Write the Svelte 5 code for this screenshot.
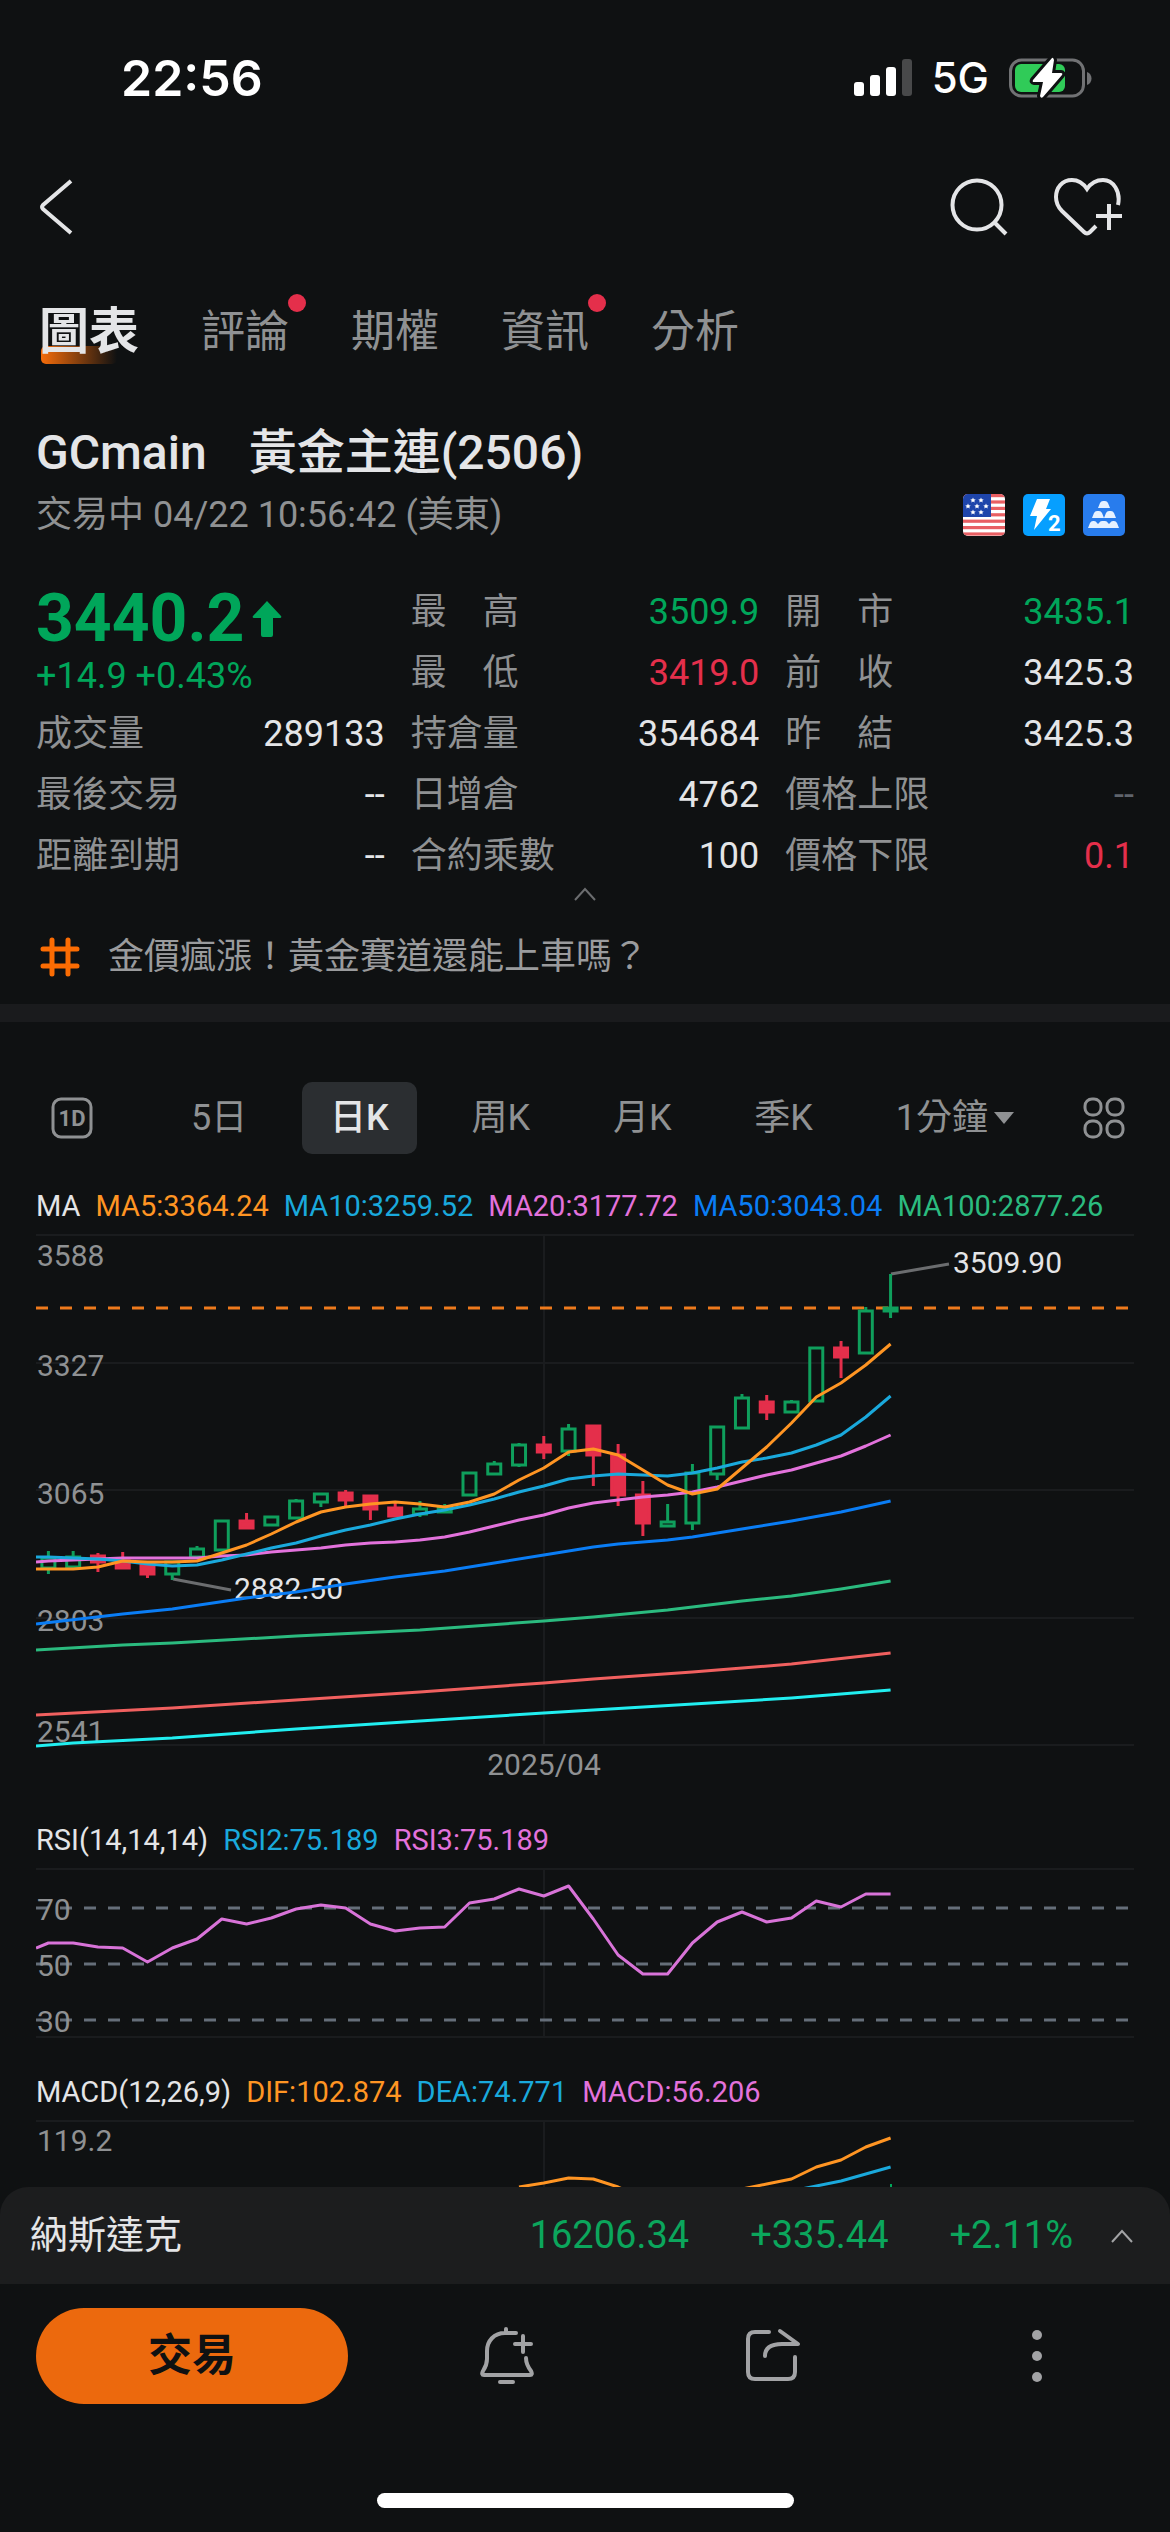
<script>
  const tabs = [
    { name: "圖表", active: true },
    { name: "評論", dot: true },
    { name: "期權" },
    { name: "資訊", dot: true },
    { name: "分析" },
  ];

  const summary = [
    { label: "成交量", value: "289133" },
    { label: "最後交易", value: "--" },
    { label: "距離到期", value: "--" },
  ];

  const details = [
    [
      { label: "最　高", value: "3509.9", tone: "up" },
      { label: "最　低", value: "3419.0", tone: "down" },
      { label: "持倉量", value: "354684" },
      { label: "日增倉", value: "4762" },
      { label: "合約乘數", value: "100" },
    ],
    [
      { label: "開　市", value: "3435.1", tone: "up" },
      { label: "前　收", value: "3425.3" },
      { label: "昨　結", value: "3425.3" },
      { label: "價格上限", value: "--", tone: "muted" },
      { label: "價格下限", value: "0.1", tone: "down" },
    ],
  ];

  const periods = ["5日", "日K", "周K", "月K", "季K"];
  let period = "日K";

  const maLegend = [
    { text: "MA", color: "#e4e5e7" },
    { text: "MA5:3364.24", color: "#ff9523" },
    { text: "MA10:3259.52", color: "#1aa9dc" },
    { text: "MA20:3177.72", color: "#e372dc" },
    { text: "MA50:3043.04", color: "#0a7df5" },
    { text: "MA100:2877.26", color: "#2bbb7f" },
  ];
  const rsiLegend = [
    { text: "RSI(14,14,14)", color: "#e4e5e7" },
    { text: "RSI2:75.189", color: "#1aa9dc" },
    { text: "RSI3:75.189", color: "#e372dc" },
  ];
  const macdLegend = [
    { text: "MACD(12,26,9)", color: "#e4e5e7" },
    { text: "DIF:102.874", color: "#ff9523" },
    { text: "DEA:74.771", color: "#1aa9dc" },
    { text: "MACD:56.206", color: "#e372dc" },
  ];

  // x of the i-th candle; anything below 0 is the left edge of the plot
  const step = 24.77;
  const cx = (i) => (i < 0 ? 0 : 12.4 + step * i);

  // body top, body bottom, high, low, rising
  const candles = [
    [322, 334, 316, 339, 1], [321, 333, 316, 334, 1], [320, 328, 318, 337, 0],
    [325, 334, 317, 334, 0], [328, 340, 327, 343, 0], [326, 340, 326, 345, 1],
    [313, 323, 311, 323, 1], [285, 316, 285, 316, 1], [285, 294, 278, 294, 0],
    [281, 291, 281, 291, 1], [265, 284, 264, 284, 1], [258, 268, 258, 272, 1],
    [257, 266, 255, 271, 0], [260, 275, 260, 285, 0], [272, 282, 268, 282, 0],
    [273, 280, 266, 282, 1], [272, 278, 269, 278, 1], [237, 261, 237, 261, 1],
    [228, 240, 226, 240, 1], [209, 231, 208, 232, 1], [209, 218, 201, 224, 0],
    [193, 217, 189, 221, 1], [190, 221, 190, 251, 0], [219, 261, 209, 271, 0],
    [259, 289, 246, 301, 0], [286, 292, 269, 292, 1], [237, 289, 229, 295, 1],
    [191, 240, 191, 245, 1], [162, 194, 159, 194, 1], [166, 178, 160, 185, 0],
    [166, 178, 165, 178, 1], [112, 167, 112, 167, 1], [112, 123, 106, 143, 0],
    [75, 119, 72, 119, 1], [72, 77, 39, 83, 1],
  ];

  const every = (ys) => ys.map((y, i) => [i - 1, y]);
  const points = (list) => list.map(([i, y]) => `${cx(i).toFixed(1)},${y}`).join(" ");

  const lines = [
    {
      color: "#21eef0",
      data: [[-1, 511], [1, 508], [5, 503], [10, 494], [15, 486], [20, 478], [22, 475], [30, 463], [34, 455]],
    },
    {
      color: "#f0605f",
      data: [[-1, 480], [5, 473], [10, 465], [15, 457], [20, 448], [22, 444], [26, 437], [30, 429], [34, 418]],
    },
    {
      color: "#2bbb7f",
      data: [[-1, 415], [3, 410], [5, 408], [10, 401], [15, 395], [20, 386], [22, 382], [25, 375], [28, 366], [30, 361], [32, 354], [34, 346]],
    },
    {
      color: "#0a7df5",
      data: [[-1, 389], [3, 379], [5, 374], [8, 363], [10, 357], [12, 349], [14, 342], [16, 336], [18, 328], [20, 320], [22, 312], [23, 309], [25, 305], [26, 302], [28, 294], [30, 286], [32, 277], [34, 266]],
    },
    {
      color: "#e372dc",
      data: every([327, 326, 325, 324, 323, 323, 323, 323, 321, 320, 317, 315, 313, 310, 308, 307, 305, 302, 297, 291, 285, 280, 273, 268, 265, 262, 260, 257, 252, 246, 240, 235, 228, 221, 211, 200]),
    },
    {
      color: "#1aa9dc",
      data: every([322, 322, 323, 324, 326, 329, 331, 330, 325, 319, 313, 308, 301, 295, 290, 284, 279, 275, 270, 264, 257, 251, 244, 241, 239, 240, 241, 238, 233, 227, 223, 218, 210, 200, 182, 161]),
    },
    {
      color: "#ff9523",
      data: every([334, 334, 334, 332, 326, 327, 327, 326, 318, 310, 299, 287, 277, 272, 269, 267, 269, 272, 267, 259, 245, 233, 217, 214, 220, 235, 250, 259, 254, 233, 212, 188, 162, 148, 130, 109]),
    },
  ];

  const gridY = [0, 128, 255, 383, 510];
  const priceLabels = [
    { text: "3588", y: 31 },
    { text: "3327", y: 141 },
    { text: "3065", y: 269 },
    { text: "2803", y: 396 },
    { text: "2541", y: 507 },
  ];

  const rsi = every([79, 74, 74, 78, 79, 93, 79, 70, 50, 55, 49, 40, 36, 39, 55, 62, 59, 58, 34, 30, 20, 27, 17, 50, 86, 105, 105, 74, 53, 43, 53, 49, 32, 38, 25, 25]);
  const rsiLevels = [
    { text: "70", y: 39 },
    { text: "50", y: 95 },
    { text: "30", y: 151 },
  ];

  const dif = [[19, 66], [20, 62], [21, 57], [22, 58], [23, 66], [25, 90], [27, 74], [28, 68], [29, 63], [30, 58], [31, 46], [32, 39], [33, 26], [34, 17]];
  const dea = [[30, 70], [31, 65], [32, 60], [33, 53], [34, 46]];

  const stars = [[10, 6], [18, 6], [5, 12], [14, 12], [23, 12], [10, 18], [18, 18]];
</script>

{#snippet legend(items)}
  <div class="legend">
    {#each items as item}
      <span style="color: {item.color}">{item.text}</span>
    {/each}
  </div>
{/snippet}

{#snippet row(item)}
  <div class="row">
    <dt>{item.label}</dt>
    <dd class={item.tone}>{item.value}</dd>
  </div>
{/snippet}

<div class="screen">
  <div class="status">
    <span class="time">22:56</span>
    <div class="status-right">
      <svg width="58" height="38" viewBox="0 0 58 38" fill="#fff">
        <rect x="0" y="23" width="10" height="14" rx="3" />
        <rect x="16" y="16" width="10" height="21" rx="3" />
        <rect x="32" y="8" width="10" height="29" rx="3" />
        <rect x="48" y="0" width="10" height="37" rx="3" fill="#48494a" />
      </svg>
      <span class="network">5G</span>
      <svg width="83" height="42" viewBox="0 0 83 42">
        <rect x="1.5" y="3" width="73" height="36" rx="11" fill="none" stroke="#717274" stroke-width="3" />
        <path d="M78 15c6 2 6 11 0 13z" fill="#717274" />
        <rect x="6" y="7" width="50" height="28" rx="6" fill="#30cb58" />
        <path d="M43 1 24 23q-1 2 1 2h9l-3 14q1 3 3 1l19-22q1-2-1-2h-9l2-13q-1-3-2-2z" fill="#fff" stroke="#0f1112" stroke-width="6" paint-order="stroke" stroke-linejoin="round" />
      </svg>
    </div>
  </div>

  <header>
    <button aria-label="返回">
      <svg width="36" height="58" viewBox="0 0 36 58" fill="none" stroke="#e4e5e7" stroke-width="4">
        <path d="M33 3 5 27q-2 2 0 4l28 24" />
      </svg>
    </button>
    <div class="header-actions">
      <button aria-label="搜尋">
        <svg width="58" height="60" viewBox="0 0 58 60" fill="none" stroke="#e4e5e7" stroke-width="4">
          <circle cx="27" cy="28" r="24.500" />
          <path d="m44 45 12 12" />
        </svg>
      </button>
      <button aria-label="加入自選">
        <svg width="68" height="60" viewBox="0 0 68 60" fill="none" stroke="#e4e5e7" stroke-width="4">
          <path d="M64 28C67 14 59 3 49 3c-7 0-12 3-16 9C29 6 24 3 18 3 8 3 2 11 2 20c0 6 2 10 6 14l22 21q3 3 6 0l6-6" />
          <path d="M42 39h26M55 27v26" />
        </svg>
      </button>
    </div>
  </header>

  <nav class="tabs">
    {#each tabs as tab}
      <a href="#{tab.name}" class:active={tab.active} class:dot={tab.dot}>{tab.name}</a>
    {/each}
  </nav>

  <section class="quote">
    <h1><span>GCmain</span><span>黃金主連(2506)</span></h1>
    <div class="session">
      <span>交易中 04/22 10:56:42 (美東)</span>
      <div class="badges">
        <svg width="42" height="42" viewBox="0 0 42 42">
          <clipPath id="flag"><rect width="42" height="42" rx="5" /></clipPath>
          <g clip-path="url(#flag)">
            <rect width="42" height="42" fill="#fff" />
            {#each [0, 1, 2, 3, 4, 5, 6] as n}
              <rect y={n * 6.4} width="42" height="3.200" fill="#e85f63" />
            {/each}
            <rect width="28" height="23" fill="#1e45ab" />
            {#each stars as [x, y]}
              <path d="M{x} {y - 2.5}l.8 1.700 1.900.2-1.400 1.300.4 1.900-1.700-1-1.700 1 .4-1.900-1.400-1.300 1.900-.2z" fill="#fff" />
            {/each}
          </g>
        </svg>
        <svg width="42" height="42" viewBox="0 0 42 42">
          <rect width="42" height="42" rx="5" fill="#069fff" />
          <path d="M14 5h13l-4 10h5L11 36l3-14H7z" fill="#fff" />
          <text x="25" y="37" class="level">2</text>
        </svg>
        <svg width="42" height="42" viewBox="0 0 42 42">
          <rect width="42" height="42" rx="5" fill="#287ced" />
          <g fill="#e6f1ff">
            <path d="M15 14l2-5q1-2 3-2h2q2 0 3 2l2 5z" />
            <path d="M9 24l2-5q1-2 3-2h2q2 0 3 2l2 5zM21 24l2-5q1-2 3-2h2q2 0 3 2l2 5z" />
            <path d="M5 34l2-5q1-2 3-2h1q2 0 3 2l1 1 1-1q1-2 3-2h3q2 0 3 2l1 1 1-1q1-2 3-2h1q2 0 3 2l2 5z" />
          </g>
        </svg>
      </div>
    </div>

    <div class="stats">
      <div>
        <div class="price">
          <strong>3440.2</strong>
          <svg width="30" height="36" viewBox="0 0 30 36" fill="#00a65a">
            <path d="M15 0 29 15q1 2-1 2h-7v17q0 2-2 2h-8q-2 0-2-2V17H2q-2 0-1-2z" />
          </svg>
        </div>
        <p class="change">+14.9 +0.43%</p>
        <dl>
          {#each summary as item}
            {@render row(item)}
          {/each}
        </dl>
      </div>
      {#each details as column}
        <dl>
          {#each column as item}
            {@render row(item)}
          {/each}
        </dl>
      {/each}
    </div>

    <button class="collapse" aria-label="收起">
      <svg width="22" height="14" viewBox="0 0 22 14" fill="none" stroke="#6b6d6f" stroke-width="2">
        <path d="M1 13 11 2l10 11" />
      </svg>
    </button>

    <a class="topic" href="#topic">
      <svg width="40" height="40" viewBox="0 0 40 40" fill="none" stroke="#fb6c03" stroke-width="5" stroke-linecap="round">
        <path d="M3 12h34M3 29h34M12 3v34M28 3v34" />
      </svg>
      <span>金價瘋漲！黃金賽道還能上車嗎？</span>
    </a>
  </section>

  <div class="divider"></div>

  <div class="toolbar">
    <button aria-label="分時">
      <svg width="42" height="42" viewBox="0 0 42 42">
        <rect x="2" y="2" width="38" height="38" rx="8" fill="none" stroke="#8f9193" stroke-width="3" />
        <text x="21" y="29" text-anchor="middle" class="oneday">1D</text>
      </svg>
    </button>
    <div class="periods">
      {#each periods as name}
        <button class:selected={period === name} on:click={() => (period = name)}>{name}</button>
      {/each}
      <button>1分鐘<i class="caret"></i></button>
    </div>
    <button aria-label="更多圖表">
      <svg width="42" height="42" viewBox="0 0 42 42" fill="none" stroke="#8f9193" stroke-width="3">
        <rect x="2" y="2" width="16" height="16" rx="7" />
        <rect x="24" y="2" width="16" height="16" rx="7" />
        <rect x="2" y="24" width="16" height="16" rx="7" />
        <rect x="24" y="24" width="16" height="16" rx="7" />
      </svg>
    </button>
  </div>

  <main>
    {@render legend(maLegend)}
    <svg class="chart" viewBox="0 -1 1098 554">
      {#each gridY as y}
        <line x1="0" y1={y} x2="1098" y2={y} class="grid" />
      {/each}
      <line x1="508" y1="0" x2="508" y2="510" class="grid" />
      {#each priceLabels as label}
        <text x="1" y={label.y}>{label.text}</text>
      {/each}
      <text x="508" y="540" text-anchor="middle">2025/04</text>
      <text x="198" y="364" class="mark">2882.50</text>
      <text x="917" y="38" class="mark">3509.90</text>
      <path d="m137 344 58 11M855 39l58-10" class="leader" />
      <line x1="0" y1="73" x2="1098" y2="73" class="last" />
      {#each candles as [top, bottom, high, low, rising], i}
        <g class={rising ? "rise" : "fall"}>
          <path d="M{cx(i)} {high}V{top}M{cx(i)} {bottom}V{low}" />
          <rect x={cx(i) - 6.5} y={top + 1} width="13" height={bottom - top - 2} />
        </g>
      {/each}
      {#each lines as line}
        <polyline points={points(line.data)} stroke={line.color} />
      {/each}
    </svg>

    {@render legend(rsiLegend)}
    <svg class="chart" viewBox="0 -1 1098 172">
      <path d="M0 0h1098M0 168h1098M508 0v168" class="grid" />
      {#each rsiLevels as level}
        <line x1="0" y1={level.y} x2="1098" y2={level.y} class="level-line" />
        <text x="1" y={level.y + 12}>{level.text}</text>
      {/each}
      <polyline points={points(rsi)} stroke="#d873d8" />
    </svg>

    {@render legend(macdLegend)}
    <svg class="chart" viewBox="0 -1 1098 67">
      <path d="M0 0h1098M508 0v67" class="grid" />
      <text x="1" y="30">119.2</text>
      <polyline points={points(dif)} stroke="#ff9523" />
      <polyline points={points(dea)} stroke="#1aa9dc" />
      <path d="M855 63v6" stroke="#00a65a" stroke-width="2" />
    </svg>
  </main>

  <footer>
    <a class="index" href="#nasdaq">
      <span class="index-name">納斯達克</span>
      <span>16206.34</span>
      <span>+335.44</span>
      <span>+2.11%</span>
      <svg width="22" height="14" viewBox="0 0 22 14" fill="none" stroke="#a2a3a5" stroke-width="2">
        <path d="M1 13 11 2l10 11" />
      </svg>
    </a>
    <div class="actions">
      <button class="trade">交易</button>
      <div class="tools">
        <button aria-label="提醒">
          <svg width="60" height="60" viewBox="0 0 60 60" class="tool">
            <path d="M29 3v4M39 7H28C17 7 10 15 10 25v8c0 6-2 9-4 12q-2 4 1 4h46q3 0 1-4c-3-4-5-8-5-13" />
            <path d="M23 56h13M38 18h16M46 10v16" />
          </svg>
        </button>
        <button aria-label="分享">
          <svg width="60" height="60" viewBox="0 0 60 60" class="tool">
            <path d="M27 6H13q-7 0-7 7v33q0 7 7 7h33q7 0 7-7V31" />
            <path d="m38 5 18 13H40C29 18 23 22 23 30" />
          </svg>
        </button>
        <button aria-label="更多">
          <svg width="60" height="60" viewBox="0 0 60 60" fill="#a2a3a5">
            <circle cx="30" cy="9" r="5" />
            <circle cx="30" cy="30" r="5" />
            <circle cx="30" cy="51" r="5" />
          </svg>
        </button>
      </div>
    </div>
    <div class="home"></div>
  </footer>
</div>

<style>
  :global(body) {
    background: #0f1112;
  }

  .screen {
    display: flex;
    flex-direction: column;
    min-height: 100vh;
    overflow: hidden;
    background: #0f1112;
    color: #e4e5e7;
    font-family: Roboto, "Noto Sans CJK TC", sans-serif;
    font-size: 36px;
  }

  svg {
    display: block;
    flex: none;
  }

  button {
    padding: 0;
    border: 0;
    background: none;
    color: inherit;
    font: inherit;
    cursor: pointer;
  }

  a {
    color: inherit;
    text-decoration: none;
  }

  dl, dd, p, h1 {
    margin: 0;
  }

  .status {
    display: flex;
    justify-content: space-between;
    align-items: center;
    padding: 48px 78px 0 121px;
    line-height: 60px;
    color: #fff;
    font-family: Inter, sans-serif;
  }

  .time {
    font-size: 50px;
    font-weight: 600;
  }

  .status-right {
    display: flex;
    align-items: center;
    gap: 20px;
  }

  .network {
    font-size: 42px;
    font-weight: 500;
  }

  header {
    display: flex;
    justify-content: space-between;
    align-items: center;
    margin-top: 69px;
    padding: 0 48px 0 38px;
  }

  .header-actions {
    display: flex;
    gap: 46px;
  }

  .tabs {
    display: flex;
    gap: 62px;
    margin-top: 63px;
    padding: 0 39px;
    line-height: 64px;
    font-size: 44px;
    color: #8f9193;
  }

  .tabs a {
    position: relative;
  }

  .tabs .active {
    z-index: 0;
    font-size: 50px;
    font-weight: 700;
    color: #e4e5e7;
  }

  .tabs .active::before {
    content: "";
    position: absolute;
    z-index: -1;
    left: 2px;
    bottom: 0;
    width: 76px;
    height: 18px;
    border-radius: 5px;
    background: linear-gradient(90deg, #f56c0a, #0f1112);
  }

  .tabs .dot::after {
    content: "";
    position: absolute;
    top: -6px;
    right: -17px;
    width: 18px;
    height: 18px;
    border-radius: 50%;
    background: #e42f4b;
  }

  .quote {
    padding: 0 36px 23px;
  }

  h1 {
    display: flex;
    gap: 42px;
    margin-top: 57px;
    line-height: 64px;
    font-size: 48px;
    font-weight: 500;
  }

  .session {
    display: flex;
    justify-content: space-between;
    align-items: center;
    margin-top: 6px;
    padding-right: 9px;
    line-height: 48px;
    color: #8f9193;
  }

  .badges {
    display: flex;
    gap: 18px;
  }

  .level {
    font: 700 22px Roboto, sans-serif;
    fill: #fff;
  }

  .stats {
    display: grid;
    grid-template-columns: repeat(3, 1fr);
    gap: 26px;
    margin-top: 43px;
    line-height: 61px;
  }

  .row {
    display: flex;
    justify-content: space-between;
    height: 61px;
  }

  dt {
    color: #8f9193;
  }

  .price {
    display: flex;
    align-items: center;
    gap: 8px;
    padding-top: 4px;
    color: #00a65a;
  }

  .price strong {
    line-height: 66px;
    font-size: 66px;
    font-weight: 700;
  }

  .change {
    height: 52px;
    line-height: 48px;
    color: #00a65a;
  }

  .up {
    color: #00a65a;
  }

  .down {
    color: #e42f4b;
  }

  .muted {
    color: #5f646c;
  }

  .collapse {
    display: block;
    margin: 0 auto;
  }

  .topic {
    display: flex;
    align-items: center;
    gap: 28px;
    margin-top: 32px;
    padding-left: 4px;
    line-height: 48px;
    color: #9a9b9d;
  }

  .divider {
    height: 18px;
    background: #1a1b1d;
  }

  .toolbar {
    display: flex;
    align-items: center;
    margin-top: 60px;
    padding: 0 45px 0 51px;
    color: #8f9193;
  }

  .oneday {
    font: 700 22px Roboto, sans-serif;
    fill: #8f9193;
  }

  .periods {
    flex: 1;
    display: flex;
    justify-content: space-between;
    margin: 0 41px 0 70px;
    line-height: 72px;
  }

  .periods button {
    display: flex;
    align-items: center;
    padding: 0 28px;
    border-radius: 10px;
  }

  .periods .selected {
    background: #2b2e31;
    color: #e4e5e7;
    font-weight: 500;
  }

  .caret {
    margin-left: 6px;
    border: 10px solid transparent;
    border-top: 12px solid #8f9193;
    border-bottom: 0;
  }

  main {
    padding: 0 36px;
  }

  .legend {
    display: flex;
    gap: 15px;
    margin-top: 32px;
    line-height: 40px;
    font-size: 29px;
    white-space: nowrap;
  }

  .chart {
    width: 100%;
    margin-top: 8px;
  }

  .chart text {
    font-size: 30px;
    fill: #8f9193;
  }

  .chart .mark {
    fill: #e4e5e7;
  }

  .chart polyline {
    fill: none;
    stroke-width: 3;
    stroke-linejoin: round;
  }

  .grid {
    fill: none;
    stroke: #1a1c1e;
    stroke-width: 2;
  }

  .leader {
    fill: none;
    stroke: #6b6d6f;
    stroke-width: 3;
  }

  .last {
    stroke: #ee7a1c;
    stroke-width: 3;
    stroke-dasharray: 12 12;
  }

  .level-line {
    stroke: #656e79;
    stroke-width: 3;
    stroke-dasharray: 12 12;
  }

  .rise, .fall {
    fill: none;
    stroke: #0f9f5c;
    stroke-width: 3;
  }

  .fall {
    fill: #e42f4b;
    stroke: #e42f4b;
  }

  footer {
    position: relative;
    padding-bottom: 24px;
    background: #0f1112;
  }

  .index {
    display: flex;
    align-items: center;
    padding: 0 37px 0 30px;
    border-radius: 28px 28px 0 0;
    background: #1c1d1e;
    line-height: 97px;
    font-size: 38px;
    color: #0ba65c;
  }

  .index span {
    margin-right: 61px;
  }

  .index .index-name {
    margin-right: auto;
    color: #e4e5e7;
  }

  .index span:nth-of-type(4) {
    margin-right: 38px;
  }

  .actions {
    display: flex;
    align-items: center;
    margin-top: 24px;
    padding-left: 36px;
  }

  .trade {
    width: 312px;
    border-radius: 48px;
    background: #ec690d;
    color: #0f1112;
    line-height: 96px;
    font-size: 44px;
    font-weight: 700;
  }

  .tools {
    flex: 1;
    display: flex;
    justify-content: space-around;
    padding: 0 1px 0 26px;
  }

  .tool {
    fill: none;
    stroke: #a2a3a5;
    stroke-width: 4;
    stroke-linecap: round;
    stroke-linejoin: round;
  }

  .home {
    width: 417px;
    height: 15px;
    margin: 89px auto 0;
    border-radius: 8px;
    background: #fff;
  }
</style>
